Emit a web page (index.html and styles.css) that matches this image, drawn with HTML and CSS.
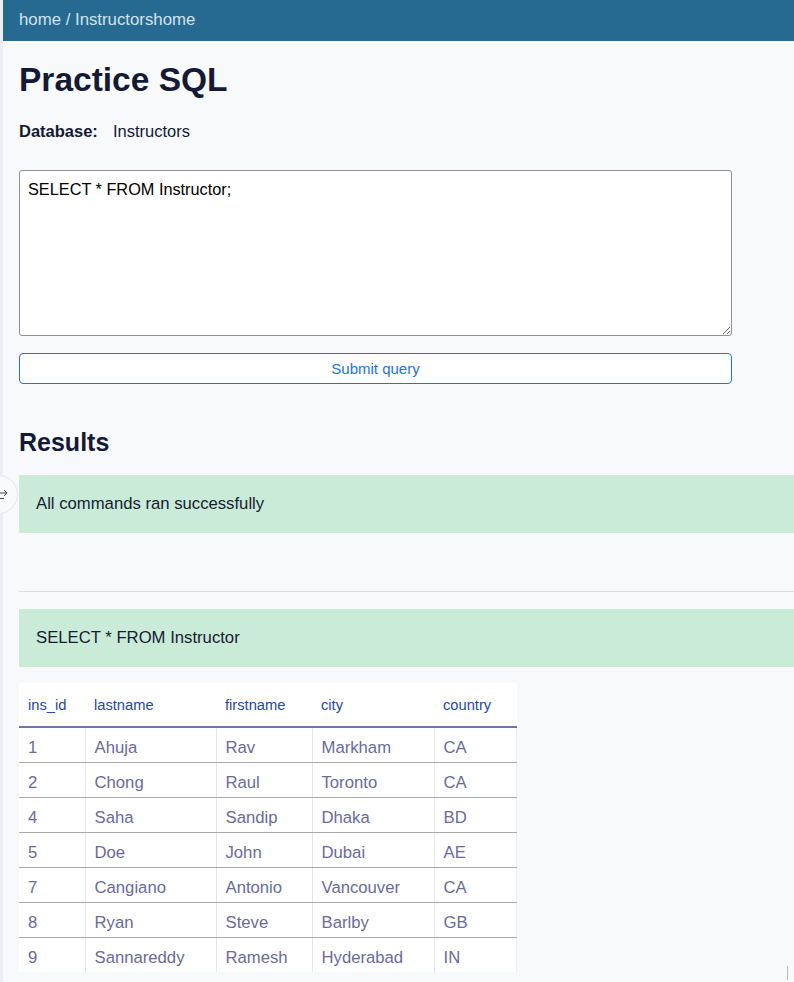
FILE: index.html
```html
<!DOCTYPE html>
<html>
<head>
<meta charset="utf-8">
<link rel="stylesheet" href="styles.css">
</head>
<body>
<div class="app">
  <div class="strip"></div>
  <div class="page">
    <header class="topbar"><span class="crumbs">home / Instructorshome</span></header>
    <main class="content">
      <h1 class="title">Practice SQL</h1>
      <p class="db"><b>Database:</b><span class="dbname">Instructors</span></p>
      <textarea class="editor">SELECT * FROM Instructor;</textarea>
      <button class="submit">Submit query</button>
      <h2 class="results">Results</h2>
      <div class="alert-wrap">
        <div class="alert">All commands ran successfully</div>
        <span class="toggle"><svg width="14" height="14" viewBox="0 0 14 14"><path d="M0 5h9M6 2l3 3-3 3M0 10.5h6" fill="none" stroke="#444" stroke-width="1"/></svg></span>
      </div>
      <hr class="sep">
      <div class="alert">SELECT * FROM Instructor</div>
      <table class="grid">
        <colgroup><col class="c1"><col class="c2"><col class="c3"><col class="c4"><col class="c5"></colgroup>
        <thead>
          <tr><th>ins_id</th><th>lastname</th><th>firstname</th><th>city</th><th>country</th></tr>
        </thead>
        <tbody>
          <tr><td>1</td><td>Ahuja</td><td>Rav</td><td>Markham</td><td>CA</td></tr>
          <tr><td>2</td><td>Chong</td><td>Raul</td><td>Toronto</td><td>CA</td></tr>
          <tr><td>4</td><td>Saha</td><td>Sandip</td><td>Dhaka</td><td>BD</td></tr>
          <tr><td>5</td><td>Doe</td><td>John</td><td>Dubai</td><td>AE</td></tr>
          <tr><td>7</td><td>Cangiano</td><td>Antonio</td><td>Vancouver</td><td>CA</td></tr>
          <tr><td>8</td><td>Ryan</td><td>Steve</td><td>Barlby</td><td>GB</td></tr>
          <tr><td>9</td><td>Sannareddy</td><td>Ramesh</td><td>Hyderabad</td><td>IN</td></tr>
        </tbody>
      </table>
    </main>
  </div>
  <span class="grip"></span>
</div>
</body>
</html>
```
FILE: styles.css
```css
html, body {
  margin: 0;
  padding: 0;
  background: #f8f9fb;
  font-family: "Liberation Sans", Arial, sans-serif;
  color: #161b33;
  overflow: hidden;
  height: 982px;
}
.app {
  position: relative;
  display: flex;
  min-height: 982px;
}
.strip {
  width: 3px;
  flex: none;
  background: #eceef4;
}
.page {
  flex: 1;
  min-width: 0;
}
.topbar {
  height: 41px;
  background: #266a92;
  display: flex;
  align-items: center;
  padding-left: 16px;
}
.crumbs {
  color: #d3e2ec;
  font-size: 16.8px;
  margin-top: -2px;
}
.content {
  padding: 0 0 0 16px;
}
.title {
  font-size: 33.5px;
  font-weight: 700;
  margin: 19px 0 0;
  line-height: 40px;
  color: #141a35;
}
.db {
  margin: 21px 0 0;
  font-size: 16.5px;
  line-height: 20px;
  color: #141a35;
}
.db b { font-weight: 700; }
.dbname { margin-left: 15px; }
.editor {
  display: block;
  box-sizing: border-box;
  width: 713px;
  height: 166px;
  margin-top: 29px;
  border: 1px solid #8f8f9d;
  border-radius: 3px;
  background: #fff;
  font-family: "Liberation Sans", Arial, sans-serif;
  font-size: 16.3px;
  color: #000;
  padding: 9px 8px;
  resize: both;
}
.submit {
  display: block;
  box-sizing: border-box;
  width: 713px;
  height: 31px;
  margin-top: 17px;
  background: #fff;
  border: 1px solid #1a73e8;
  border-radius: 4px;
  color: #1a73e8;
  font-family: "Liberation Sans", Arial, sans-serif;
  font-size: 15px;
  padding: 0 0 1px;
}
.results {
  font-size: 25px;
  font-weight: 700;
  margin: 43px 0 0;
  line-height: 30px;
  color: #141a35;
}
.alert-wrap {
  position: relative;
  margin-top: 18px;
}
.alert {
  background: #c9ebd8;
  height: 58px;
  display: flex;
  align-items: center;
  padding-left: 17px;
  font-size: 16.7px;
  color: #161b33;
}
.toggle {
  position: absolute;
  left: -40px;
  top: 0;
  width: 39px;
  height: 39px;
  border-radius: 50%;
  background: #f8f9fb;
  border: 1px solid #e4e6ec;
  display: flex;
  align-items: center;
  justify-content: flex-end;
  padding-right: 5px;
  box-sizing: border-box;
}
.sep {
  border: 0;
  border-top: 1px solid #dcdee4;
  margin: 58px 0 0;
}
.sep + .alert { margin-top: 17px; }
.grid {
  margin-top: 16px;
  border-collapse: collapse;
  table-layout: fixed;
  background: #fff;
  width: 497px;
  font-size: 16.7px;
}
.c1 { width: 66px; }
.c2 { width: 131px; }
.c3 { width: 96px; }
.c4 { width: 122px; }
.c5 { width: 82px; }
.grid th {
  text-align: left;
  font-weight: 400;
  font-size: 14.7px;
  color: #2547a8;
  height: 43px;
  padding: 0 9px;
  border-bottom: 2px solid #6878b5;
}
.grid td {
  height: 35px;
  padding: 6px 9px 0;
  box-sizing: border-box;
  color: #6a6a9e;
  border-bottom: 1px solid #aaaaaa;
  border-left: 1px solid #e6e6e6;
  white-space: nowrap;
}
.grid td:first-child { border-left: 0; }
.grid tr:last-child td { border-bottom: 0; }
.grid td:last-child { border-right: 1px solid #eeeeee; }
.grip {
  position: absolute;
  left: 787px;
  top: 966px;
  width: 1px;
  height: 14px;
  background: #b8b8bc;
}
```
